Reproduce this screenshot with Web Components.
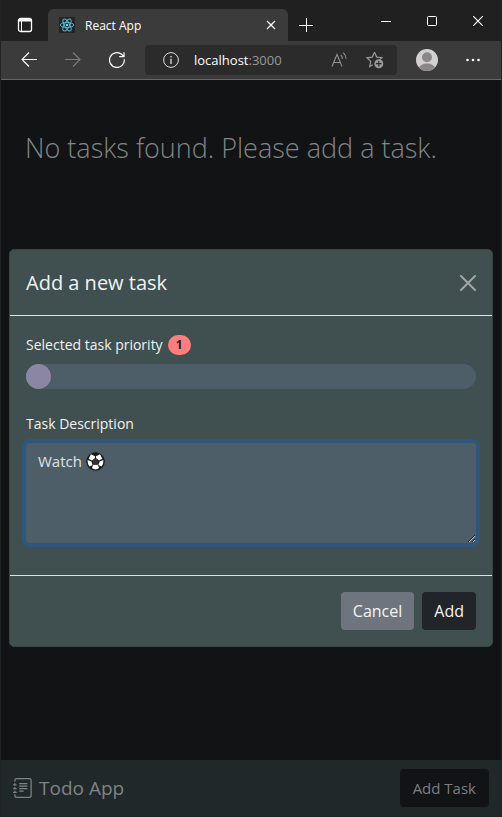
<!DOCTYPE html>
<html lang="en">
<head>
<meta charset="utf-8">
<meta name="viewport" content="width=device-width, initial-scale=1">
<title>React App</title>
<style>
  html, body { height: 100%; }
  body { margin: 0; background: #111315; font-family: "Open Sans", "Noto Sans", sans-serif; }
</style>
</head>
<body>
<browser-window>
  <tab-strip slot="tabs">React App</tab-strip>
  <browser-toolbar slot="toolbar"><span slot="host">localhost</span><span slot="port">:3000</span></browser-toolbar>
  <todo-page>
    <task-empty>No tasks found. Please add a task.</task-empty>
    <app-navbar slot="navbar">Todo App<app-button slot="action" variant="dim">Add Task</app-button></app-navbar>
    <task-dialog slot="dialog" heading="Add a new task">
      <priority-field value="1">Selected task priority</priority-field>
      <description-field value="Watch ⚽">Task Description</description-field>
      <app-button slot="actions" variant="secondary">Cancel</app-button>
      <app-button slot="actions" variant="dark">Add</app-button>
    </task-dialog>
  </todo-page>
</browser-window>

<script>
function define(name, html, setup) {
  const template = document.createElement('template');
  template.innerHTML = '<style>*{box-sizing:border-box}button{font:inherit;color:inherit;background:none;border:0;padding:0;margin:0}svg{display:block}</style>' + html;
  customElements.define(name, class extends HTMLElement {
    constructor() {
      super();
      this.attachShadow({ mode: 'open' }).appendChild(template.content.cloneNode(true));
    }
    connectedCallback() { if (setup) setup(this, this.shadowRoot); }
  });
}

define('browser-window', `
<style>
  :host { display: flex; flex-direction: column; box-sizing: border-box; min-height: 100vh; border: solid #222324; border-width: 0 1px 1px 1px; }
  ::slotted(todo-page) { flex: 1; }
</style>
<slot name="tabs"></slot><slot name="toolbar"></slot><slot></slot>`);

define('tab-strip', `
<style>
  :host { display: flex; align-items: flex-end; height: 41px; background: #202020; color: #fff; font-size: 12px; }
  .panel { width: 47px; height: 32px; display: grid; place-items: center; }
  .tab { flex: 0 1 240px; height: 32px; display: flex; align-items: center; gap: 10px; padding: 0 10px 0 11px; background: #3b3b3b; border-radius: 6px 6px 0 0; }
  .name { flex: 1; }
  .tab button { width: 14px; height: 14px; display: grid; place-items: center; }
  .new { width: 36px; height: 32px; display: grid; place-items: center; }
  .window { margin-left: auto; align-self: flex-start; display: flex; }
  .window button { width: 46px; height: 42px; display: grid; place-items: center; }
</style>
<button class="panel" aria-label="Tab actions">
  <svg width="16" height="16" viewBox="0 0 16 16"><rect x="1.5" y="1.5" width="13" height="13" rx="2" fill="none" stroke="#fff" stroke-width="1.3"/><path d="M2 2h12v2.5H2z" fill="#fff"/><path d="M4.5 4v10" stroke="#fff"/></svg>
</button>
<div class="tab">
  <svg width="16" height="16" viewBox="0 0 16 16"><rect width="16" height="16" rx="1" fill="#222425"/><g fill="none" stroke="#5cbcd6" stroke-width=".9"><ellipse cx="8" cy="8" rx="6.7" ry="2.6"/><ellipse cx="8" cy="8" rx="6.7" ry="2.6" transform="rotate(60 8 8)"/><ellipse cx="8" cy="8" rx="6.7" ry="2.6" transform="rotate(120 8 8)"/></g><circle cx="8" cy="8" r="1.3" fill="#61dafb"/></svg>
  <span class="name"><slot></slot></span>
  <button aria-label="Close tab"><svg width="10" height="10" viewBox="0 0 10 10"><path d="M1 1l8 8M9 1l-8 8" stroke="#fff" stroke-width="1.3"/></svg></button>
</div>
<button class="new" aria-label="New tab"><svg width="14" height="14" viewBox="0 0 14 14"><path d="M7.5 0v14M0 7.5h14" stroke="#fff"/></svg></button>
<div class="window">
  <button aria-label="Minimize"><svg width="10" height="10" viewBox="0 0 10 10"><path d="M0 5.5h10" stroke="#fff"/></svg></button>
  <button aria-label="Maximize"><svg width="10" height="10" viewBox="0 0 10 10"><rect x=".5" y=".5" width="9" height="9" rx="1" fill="none" stroke="#fff"/></svg></button>
  <button aria-label="Close window"><svg width="10" height="10" viewBox="0 0 10 10"><path d="M0 0l10 10M10 0L0 10" stroke="#fff" stroke-width="1.2"/></svg></button>
</div>`);

define('browser-toolbar', `
<style>
  :host { display: flex; align-items: center; height: 39px; box-sizing: border-box; padding: 0 20px; background: #3b3b3b; border-bottom: 1px solid #666766; }
  .nav { display: flex; gap: 28px; }
  .address { flex: 1; min-width: 0; height: 30px; margin: 0 19px 0 20px; padding: 0 13px 0 18px; display: flex; align-items: center; background: #2b2b2b; border-radius: 4px; font-size: 13px; color: #999; }
  .url { flex: 1; padding-left: 15px; white-space: nowrap; }
  .host { color: #fff; }
  .read { margin-right: 19px; }
  .more { margin-left: 27px; }
</style>
<div class="nav">
  <button aria-label="Back"><svg width="16" height="16" viewBox="0 0 16 16"><path d="M16 7.5H1M8 .5L1 7.5l7 7" fill="none" stroke="#fff" stroke-width="1.1"/></svg></button>
  <button aria-label="Forward" disabled><svg width="16" height="16" viewBox="0 0 16 16"><path d="M0 7.5h15M8 .5l7 7-7 7" fill="none" stroke="#7c7c7c" stroke-width="1.1"/></svg></button>
  <button aria-label="Refresh"><svg width="16" height="16" viewBox="0 0 16 16"><path d="M15.3 7.2A7.4 7.4 0 1 1 12.6 2.3L14.8 4.4M15 .2v4.4h-4.8" fill="none" stroke="#fff" stroke-width="1.2"/></svg></button>
</div>
<div class="address">
  <svg width="16" height="16" viewBox="0 0 16 16"><circle cx="8" cy="8" r="7.4" fill="none" stroke="#ddd"/><path d="M8 6.8V12M8 4v1.5" stroke="#ddd" stroke-width="1.3"/></svg>
  <span class="url"><span class="host"><slot name="host"></slot></span><slot name="port"></slot></span>
  <button class="read" aria-label="Read aloud"><svg width="16" height="16" viewBox="0 0 16 16" fill="none" stroke="#929292" stroke-width="1.1"><path d="M1 14.5L6 2.5l5 12M2.8 10.5h6.5M9.8 3q1.6 1.5 1.6 4M12.2.7q2.8 2.5 2.8 6"/></svg></button>
  <button aria-label="Add to favorites"><svg width="18" height="18" viewBox="0 0 18 18"><path d="M8.5 1.3l2.2 4.8 5.3.6-2.5 2.2M6.7 13.7L3.7 15.5l1-5.1L1 6.8l5.2-.7 2.3-4.8" fill="none" stroke="#999" stroke-width="1.2"/><circle cx="12.8" cy="12.7" r="4.5" fill="#999"/><path d="M12.8 10v5.4M10.1 12.7h5.4" stroke="#2b2b2b" stroke-width="1.2"/></svg></button>
</div>
<button aria-label="Profile"><svg width="22" height="22" viewBox="0 0 22 22"><defs><clipPath id="c"><circle cx="11" cy="11" r="11"/></clipPath></defs><g clip-path="url(#c)"><path fill="#d3d1cf" d="M0 0h22v22H0z"/><circle cx="11" cy="8.3" r="5" fill="#8b8785"/><ellipse cx="11" cy="19" rx="8" ry="4.4" fill="#8b8785"/></g></svg></button>
<button class="more" aria-label="Settings and more"><svg width="16" height="16" viewBox="0 0 16 16" fill="#fff"><circle cx="2.5" cy="8" r="1.3"/><circle cx="8" cy="8" r="1.3"/><circle cx="13.5" cy="8" r="1.3"/></svg></button>`);

define('todo-page', `
<style>
  :host { position: relative; display: flex; flex-direction: column; background: #111315; }
  main { flex: 1; padding: 44px 24px 0; }
  .overlay { position: absolute; inset: 0; display: flex; align-items: center; padding: 8px; }
  ::slotted(task-dialog) { flex: 1; min-width: 0; }
</style>
<main><slot></slot></main>
<slot name="navbar"></slot>
<div class="overlay"><slot name="dialog"></slot></div>`);

define('task-empty', `
<style>
  :host { display: block; color: #838586; }
  h1 { margin: 0; font-size: 27px; font-weight: 300; line-height: 48px; }
</style>
<h1><slot></slot></h1>`);

define('app-navbar', `
<style>
  :host { display: flex; align-items: center; height: 56px; padding: 0 12px; background: #212829; color: #7f8384; }
  a { display: flex; align-items: center; gap: 6px; flex: 1; color: inherit; text-decoration: none; font-size: 19px; line-height: 30px; }
</style>
<a href="#"><svg width="20" height="20" viewBox="0 0 16 16" fill="currentColor"><path d="M5 0h8a2 2 0 0 1 2 2v12a2 2 0 0 1-2 2H3a2 2 0 0 1-2-2v-1h1v1a1 1 0 0 0 1 1h10a1 1 0 0 0 1-1V2a1 1 0 0 0-1-1H3a1 1 0 0 0-1 1v1H1V2a2 2 0 0 1 2-2z"/><path d="M1 5v-.5a.5.5 0 0 1 1 0V5h.5a.5.5 0 0 1 0 1h-2a.5.5 0 0 1 0-1zm0 3v-.5a.5.5 0 0 1 1 0V8h.5a.5.5 0 0 1 0 1h-2a.5.5 0 0 1 0-1zm0 3v-.5a.5.5 0 0 1 1 0v.5h.5a.5.5 0 0 1 0 1h-2a.5.5 0 0 1 0-1zM5 4h6.5v1H5zm0 2h6.5v1H5zm0 2h6.5v1H5zm0 2h3.5v1H5z"/></svg><span><slot></slot></span></a>
<slot name="action"></slot>`);

define('app-button', `
<style>
  :host { display: block; color: #f4f4f4; font-size: 16px; --fill: #212429; --pad: 12px; }
  :host([variant="secondary"]) { --fill: #6e757e; }
  :host([variant="dim"]) { --fill: #111315; --pad: 13px; color: #7d7f80; font-size: 15px; }
  button { display: block; height: 38px; padding: 0 var(--pad); border-radius: 4px; background: var(--fill); line-height: 24px; }
</style>
<button type="button"><slot></slot></button>`);

define('task-dialog', `
<style>
  :host { display: block; background: #404f4f; border: 1px solid #354242; border-radius: 5px; color: #f0f3f3; }
  header { display: flex; align-items: center; justify-content: space-between; padding: 16px; border-bottom: 1px solid #dee2e6; }
  h2 { margin: 0; font-size: 20px; line-height: 33px; font-weight: 400; }
  .body { display: grid; gap: 22px; padding: 16px 16px 32px; }
  footer { display: flex; justify-content: flex-end; gap: 8px; padding: 16px; border-top: 1px solid #dee2e6; }
</style>
<section role="dialog" aria-labelledby="t">
  <header><h2 id="t"></h2><button type="button" aria-label="Close"><svg width="16" height="16" viewBox="0 0 16 16"><path d="M1 1l14 14M15 1L1 15" stroke="#9fa7a7" stroke-width="2" stroke-linecap="round"/></svg></button></header>
  <div class="body"><slot></slot></div>
  <footer><slot name="actions"></slot></footer>
</section>`, (el, root) => { root.querySelector('h2').textContent = el.getAttribute('heading'); });

define('priority-field', `
<style>
  :host { display: block; font-size: 14px; line-height: 26px; }
  .label { display: flex; align-items: center; gap: 5px; margin-bottom: 6px; height: 26px; }
  output { width: 23px; height: 20px; border-radius: 10px; background: #ff7d7d; color: #212529; font-size: 12px; line-height: 20px; font-weight: 700; text-align: center; }
  input { display: block; width: 100%; height: 25px; margin: 0; appearance: none; background: #4d5e68; border-radius: 13px; outline: 0; }
  input::-webkit-slider-thumb { appearance: none; width: 25px; height: 25px; border-radius: 50%; background: #8b87a3; }
</style>
<div class="label"><label for="p"><slot></slot></label><output for="p"></output></div>
<input id="p" type="range" min="1" max="10" value="1">`, (el, root) => {
  const input = root.querySelector('input'), out = root.querySelector('output');
  input.value = el.getAttribute('value');
  out.textContent = input.value;
  input.oninput = () => { out.textContent = input.value; };
});

define('description-field', `
<style>
  :host { display: block; font-size: 14px; line-height: 24px; }
  label { display: block; margin-bottom: 6px; line-height: 26px; }
  .box { position: relative; }
  .ball { position: absolute; left: 60px; top: 9px; pointer-events: none; }
  textarea { display: block; width: 100%; height: 100px; margin: 0; padding: 6px 12px; border: 0; border-radius: 4px; background: #4d5e68; box-shadow: 0 0 0 4px #31567d; color: #dee2e6; font: inherit; font-size: 15px; resize: vertical; outline: 0; }
</style>
<label for="d"><slot></slot></label>
<div class="box">
  <textarea id="d"></textarea>
  <svg class="ball" width="19" height="19" viewBox="0 0 19 19" aria-hidden="true">
    <circle cx="9.5" cy="9.5" r="9.3" fill="#17191a"/>
    <g fill="#fff"><path d="M5 2.2L9 4.2v2L6 8.6 2.6 6.8z"/><path d="M14 2.2l-4 2v2l3 2.4 3.4-1.8z"/><path d="M1.5 8l3.9 1.6 1.2 3.5-3 1.4Q1.3 12 1.5 8z"/><path d="M17.5 8l-3.9 1.6-1.2 3.5 3 1.4q2.3-2.5 2.1-6.5z"/><path d="M7.2 12.7h4.6l1.3 3.4q-3.6 2.8-7.2 0z"/></g>
    <path d="M9.5 6l3.3 2.5-1.2 3.9H7.4L6.2 8.5z" fill="#303438"/>
  </svg>
</div>`, (el, root) => {
  const area = root.querySelector('textarea'), ball = root.querySelector('.ball');
  area.value = el.getAttribute('value');
  area.oninput = () => { ball.style.display = area.value.startsWith('Watch ⚽') ? '' : 'none'; };
});
</script>
</body>
</html>
